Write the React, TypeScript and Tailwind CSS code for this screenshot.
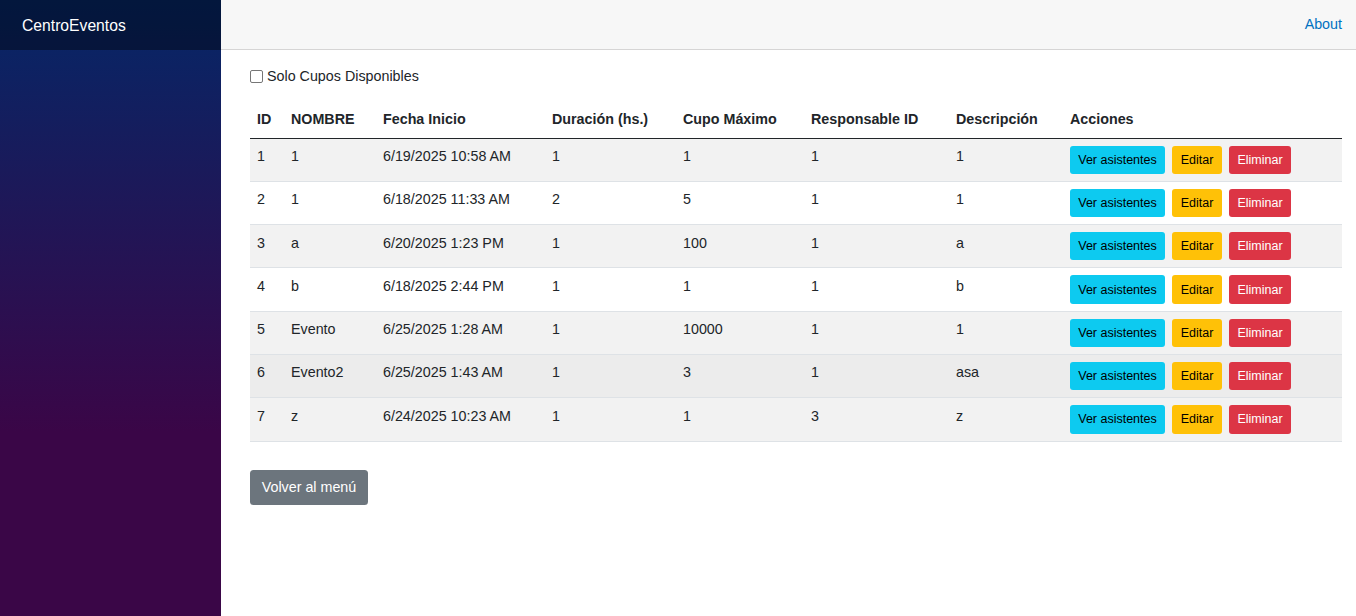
import React from "react";

const rows = [
  { id: 1, nombre: "1", fecha: "6/19/2025 10:58 AM", dur: "1", cupo: "1", resp: "1", desc: "1" },
  { id: 2, nombre: "1", fecha: "6/18/2025 11:33 AM", dur: "2", cupo: "5", resp: "1", desc: "1" },
  { id: 3, nombre: "a", fecha: "6/20/2025 1:23 PM", dur: "1", cupo: "100", resp: "1", desc: "a" },
  { id: 4, nombre: "b", fecha: "6/18/2025 2:44 PM", dur: "1", cupo: "1", resp: "1", desc: "b" },
  { id: 5, nombre: "Evento", fecha: "6/25/2025 1:28 AM", dur: "1", cupo: "10000", resp: "1", desc: "1" },
  { id: 6, nombre: "Evento2", fecha: "6/25/2025 1:43 AM", dur: "1", cupo: "3", resp: "1", desc: "asa" },
  { id: 7, nombre: "z", fecha: "6/24/2025 10:23 AM", dur: "1", cupo: "1", resp: "3", desc: "z" },
];

export default function App() {
  return (
    <div
      className="flex h-[616px] w-full text-[14.3px] leading-[21.4px] text-[#212529]"
      style={{ fontFamily: '"Liberation Sans", Arial, Helvetica, sans-serif' }}
    >
      <aside className="w-[221px] shrink-0 bg-[linear-gradient(180deg,rgb(5,39,103)_0%,#3a0647_70%)]">
        <div className="flex h-[50px] items-center bg-[rgba(0,0,0,0.4)] pl-[22px]">
          <span className="pt-[1px] text-[15.7px] text-white">CentroEventos</span>
        </div>
      </aside>
      <main className="flex min-w-0 flex-1 flex-col">
        <div className="flex h-[50px] items-center justify-end border-b border-[#d6d5d5] bg-[#f7f7f7] pr-[14px]">
          <a className="text-[#0071c1]">About</a>
        </div>
        <div className="pl-[29px] pr-[14px] pt-[16px]">
          <label className="flex h-[21px] items-center">
            <span className="mr-[4px] inline-block h-[13px] w-[13px] rounded-[2px] border border-[#767676] bg-white" />
            <span>Solo Cupos Disponibles</span>
          </label>
          <table className="mt-[13px] w-full table-fixed border-collapse">
            <colgroup>
              <col className="w-[34px]" />
              <col className="w-[92px]" />
              <col className="w-[169px]" />
              <col className="w-[131px]" />
              <col className="w-[128px]" />
              <col className="w-[145px]" />
              <col className="w-[114px]" />
              <col />
            </colgroup>
            <thead>
              <tr className="border-b border-[#212529]">
                {["ID", "NOMBRE", "Fecha Inicio", "Duración (hs.)", "Cupo Máximo", "Responsable ID", "Descripción", "Acciones"].map((h) => (
                  <th key={h} className="h-[38px] px-[7px] pt-[9px] pb-[6px] text-left align-top font-bold">
                    {h}
                  </th>
                ))}
              </tr>
            </thead>
            <tbody>
              {rows.map((r) => {
                const bg = r.id === 6 ? "bg-[#ececec]" : r.id % 2 === 1 ? "bg-[#f2f2f2]" : "bg-white";
                return (
                  <tr key={r.id} className={`border-b border-[#dee2e6] ${bg}`}>
                    <td className="px-[7px] pt-[7.5px] align-top">{r.id}</td>
                    <td className="px-[7px] pt-[7.5px] align-top">{r.nombre}</td>
                    <td className="px-[7px] pt-[7.5px] align-top">{r.fecha}</td>
                    <td className="px-[7px] pt-[7.5px] align-top">{r.dur}</td>
                    <td className="px-[7px] pt-[7.5px] align-top">{r.cupo}</td>
                    <td className="px-[7px] pt-[7.5px] align-top">{r.resp}</td>
                    <td className="px-[7px] pt-[7.5px] align-top">{r.desc}</td>
                    <td className="px-[7px] py-[7px] align-top">
                      <div className="flex gap-[7px]">
                        <button className="h-[28.3px] w-[95px] rounded-[3px] bg-[#0dcaf0] text-[12.5px] leading-[18px] text-black">
                          Ver asistentes
                        </button>
                        <button className="h-[28.3px] w-[50px] rounded-[3px] bg-[#ffc107] text-[12.5px] leading-[18px] text-black">
                          Editar
                        </button>
                        <button className="h-[28.3px] w-[62px] rounded-[3px] bg-[#dc3545] text-[12.5px] leading-[18px] text-white">
                          Eliminar
                        </button>
                      </div>
                    </td>
                  </tr>
                );
              })}
            </tbody>
          </table>
          <button className="mt-[28px] h-[35px] w-[118px] rounded-[3.5px] bg-[#6c757d] pt-[1px] text-[14.3px] text-white">
            Volver al menú
          </button>
        </div>
      </main>
    </div>
  );
}
